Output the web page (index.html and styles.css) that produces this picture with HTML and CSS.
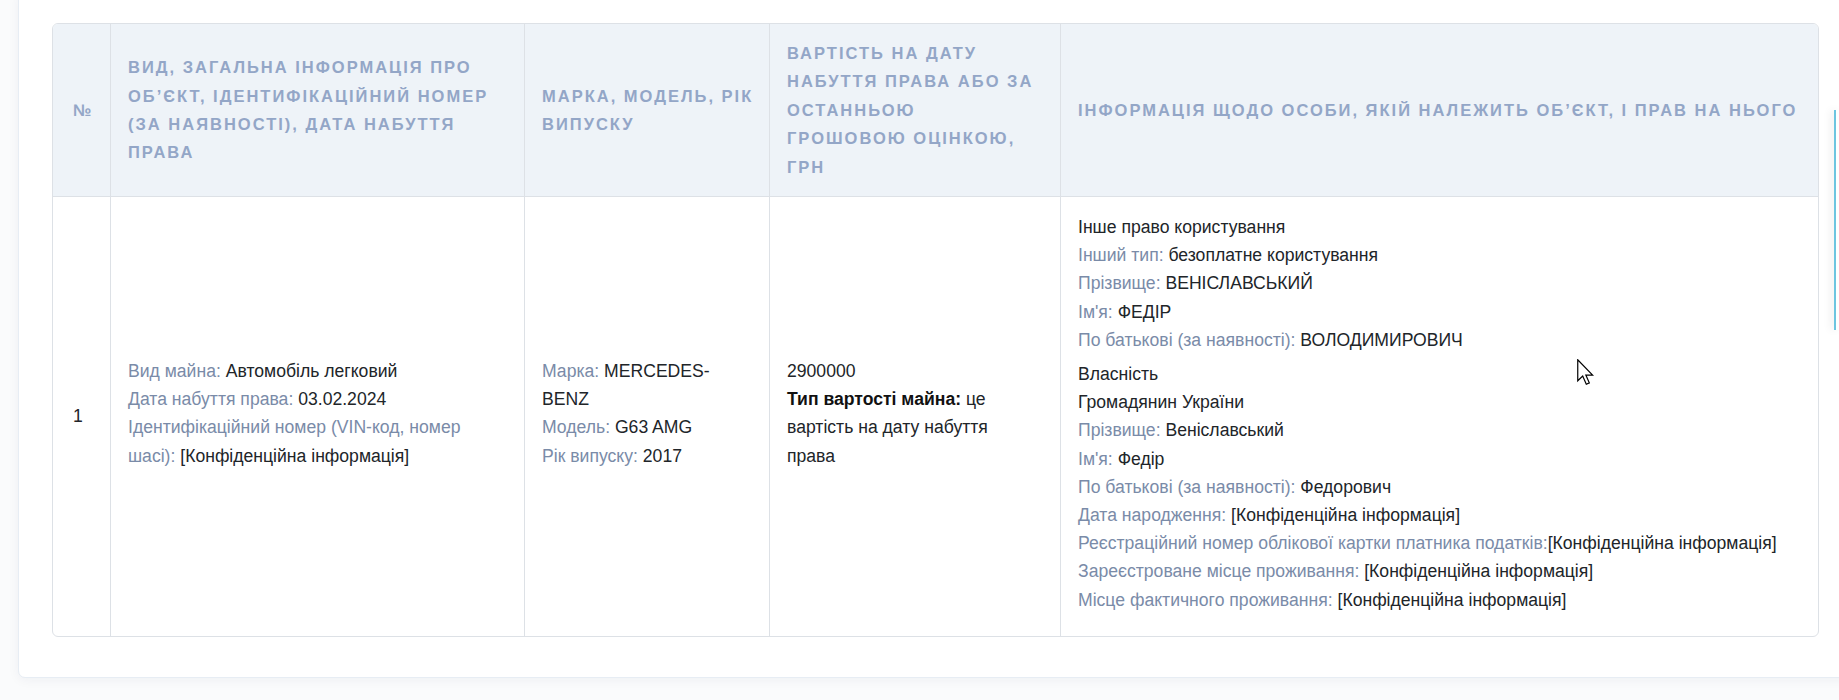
FILE: index.html
```html
<!DOCTYPE html>
<html lang="uk">
<head>
<meta charset="utf-8">
<title>Транспортні засоби</title>
<link rel="stylesheet" href="styles.css">
</head>
<body>
<div class="page">
  <section class="card">
    <table class="assets">
      <colgroup>
        <col class="c-num">
        <col class="c-kind">
        <col class="c-brand">
        <col class="c-cost">
        <col class="c-owner">
      </colgroup>
      <thead>
        <tr>
          <th class="num">№</th>
          <th>Вид, загальна інформація про<br>об’єкт, ідентифікаційний номер<br>(за наявності), дата набуття<br>права</th>
          <th>Марка, модель, рік<br>випуску</th>
          <th>Вартість на дату<br>набуття права або за<br>останньою<br>грошовою оцінкою,<br>грн</th>
          <th>Інформація щодо особи, якій належить об’єкт, і прав на нього</th>
        </tr>
      </thead>
      <tbody>
        <tr>
          <td class="num">1</td>
          <td>
            <div class="block">
              <div><span class="lbl">Вид майна:</span> Автомобіль легковий</div>
              <div><span class="lbl">Дата набуття права:</span> 03.02.2024</div>
              <div><span class="lbl">Ідентифікаційний номер (VIN-код, номер<br>шасі):</span> [Конфіденційна інформація]</div>
            </div>
          </td>
          <td>
            <div class="block">
              <div><span class="lbl">Марка:</span> MERCEDES-<br>BENZ</div>
              <div><span class="lbl">Модель:</span> G63 AMG</div>
              <div><span class="lbl">Рік випуску:</span> 2017</div>
            </div>
          </td>
          <td>
            <div class="block">
              <div>2900000</div>
              <div><b>Тип вартості майна:</b> це<br>вартість на дату набуття<br>права</div>
            </div>
          </td>
          <td>
            <div class="block">
              <div>Інше право користування</div>
              <div><span class="lbl">Інший тип:</span> безоплатне користування</div>
              <div><span class="lbl">Прізвище:</span> ВЕНІСЛАВСЬКИЙ</div>
              <div><span class="lbl">Ім'я:</span> ФЕДІР</div>
              <div><span class="lbl">По батькові (за наявності):</span> ВОЛОДИМИРОВИЧ</div>
            </div>
            <div class="block">
              <div>Власність</div>
              <div>Громадянин України</div>
              <div><span class="lbl">Прізвище:</span> Веніславський</div>
              <div><span class="lbl">Ім'я:</span> Федір</div>
              <div><span class="lbl">По батькові (за наявності):</span> Федорович</div>
              <div><span class="lbl">Дата народження:</span> [Конфіденційна інформація]</div>
              <div><span class="lbl">Реєстраційний номер облікової картки платника податків:</span>[Конфіденційна інформація]</div>
              <div><span class="lbl">Зареєстроване місце проживання:</span> [Конфіденційна інформація]</div>
              <div><span class="lbl">Місце фактичного проживання:</span> [Конфіденційна інформація]</div>
            </div>
          </td>
        </tr>
      </tbody>
    </table>
  </section>
</div>
<div class="side-tab"></div>
<svg class="cursor" width="18" height="27" viewBox="0 0 12 18" aria-hidden="true">
  <path d="M0.5 0.5 L0.5 14.5 L3.8 11.4 L6.2 16.8 L8.2 15.9 L5.9 10.7 L10.4 10.7 Z" fill="#fff" stroke="#000" stroke-width="0.8" stroke-linejoin="miter"/>
</svg>
</body>
</html>
```

FILE: styles.css
```css
html, body {
  margin: 0;
  padding: 0;
  height: 100%;
  overflow: hidden;
}

body {
  background: #fafbfc;
  font-family: "Liberation Sans", Arial, sans-serif;
  color: #212529;
  position: relative;
}

.page {
  width: 1900px;
}

.card {
  margin: -10px 0 0 18px;
  width: 1767px;
  padding: 32px 32px 40px 33px;
  background: #fff;
  border: 1px solid #e7edf4;
  border-radius: 7px;
  box-shadow: 0 2px 12px rgba(20, 40, 80, 0.05);
}

.assets {
  width: 1767px;
  table-layout: fixed;
  border-collapse: separate;
  border-spacing: 0;
  border: 1px solid #dde1e6;
  border-radius: 6px;
  overflow: hidden;
}

.c-num { width: 58px; }
.c-kind { width: 414px; }
.c-brand { width: 245px; }
.c-cost { width: 291px; }
.c-owner { width: auto; }

.assets th {
  background: #eef3f8;
  color: #93a6c7;
  font-size: 16.5px;
  font-weight: 700;
  letter-spacing: 2px;
  text-transform: uppercase;
  line-height: 28.4px;
  text-align: left;
  vertical-align: middle;
  padding: 15px 17px;
  white-space: nowrap;
  border-right: 1px solid #dde1e6;
  border-bottom: 1px solid #dde1e6;
}

.assets td {
  font-size: 17.6px;
  line-height: 28.2px;
  vertical-align: middle;
  padding: 16px 17px;
  white-space: nowrap;
  border-right: 1px solid #dde1e6;
}

.assets th:last-child,
.assets td:last-child {
  border-right: 0;
}

.assets .num {
  padding-left: 20px;
  padding-right: 10px;
  letter-spacing: 0;
}

.block {
  margin-bottom: 6px;
}

.lbl {
  color: #7a8ba8;
}

.assets b {
  font-weight: 700;
  color: #111;
}

.side-tab {
  position: absolute;
  right: 0;
  top: 110px;
  width: 3px;
  height: 220px;
  background: #fff;
  border-left: 2px solid #6cc5e0;
  box-shadow: -3px 0 8px rgba(0, 0, 0, 0.08);
}

.cursor {
  position: absolute;
  left: 1577px;
  top: 359px;
}
```
